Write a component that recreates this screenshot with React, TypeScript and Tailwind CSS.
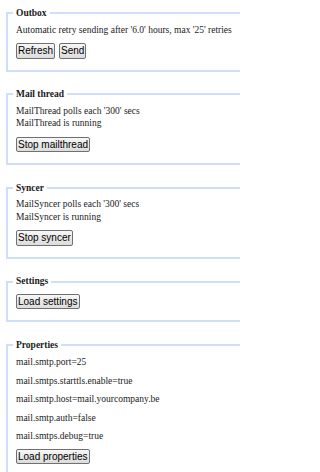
import type { ReactNode } from "react";

const Btn = ({ children }: { children: ReactNode }) => (
  <button
    type="button"
    className="font-['Liberation_Sans',Arial,sans-serif] text-[10px] leading-[11.6px] text-black px-[1px] py-[1px] border border-[#707070] rounded-[2px] bg-gradient-to-b from-[#f7f7f7] to-[#dcdcdc]"
  >
    {children}
  </button>
);

const Box = ({ title, children }: { title: string; children: ReactNode }) => (
  <fieldset className="ml-[6px] w-[240px] border-2 border-r-0 border-[#cfdffa] px-[5px] pt-[4px] pb-[11px] mt-[16.5px] first:mt-0">
    <legend className="px-[3px] font-bold">{title}</legend>
    <div className="pl-[3px]">{children}</div>
  </fieldset>
);

const props = [
  "mail.smtp.port=25",
  "mail.smtps.starttls.enable=true",
  "mail.smtp.host=mail.yourcompany.be",
  "mail.smtp.auth=false",
  "mail.smtps.debug=true",
];

export default function App() {
  return (
    <div className="w-[240px] h-[472px] overflow-hidden bg-white pt-[7px] font-['Liberation_Serif','Times_New_Roman',serif] text-[9.5px] leading-[12.5px] text-[#1a1a1a]">
      <Box title="Outbox">
        <div>Automatic retry sending after '6.0' hours, max '25' retries</div>
        <div className="mt-[7px] flex gap-[4px]">
          <Btn>Refresh</Btn>
          <Btn>Send</Btn>
        </div>
      </Box>

      <Box title="Mail thread">
        <div>MailThread polls each '300' secs</div>
        <div>MailThread is running</div>
        <div className="mt-[7px] flex">
          <Btn>Stop mailthread</Btn>
        </div>
      </Box>

      <Box title="Syncer">
        <div>MailSyncer polls each '300' secs</div>
        <div>MailSyncer is running</div>
        <div className="mt-[7px] flex">
          <Btn>Stop syncer</Btn>
        </div>
      </Box>

      <Box title="Settings">
        <div className="mt-[2px] flex">
          <Btn>Load settings</Btn>
        </div>
      </Box>

      <Box title="Properties">
        <div className="mt-[1px] flex flex-col gap-[6px]">
          {props.map((p) => (
            <div key={p}>{p}</div>
          ))}
        </div>
        <div className="mt-[6px] flex">
          <Btn>Load properties</Btn>
        </div>
      </Box>
    </div>
  );
}
